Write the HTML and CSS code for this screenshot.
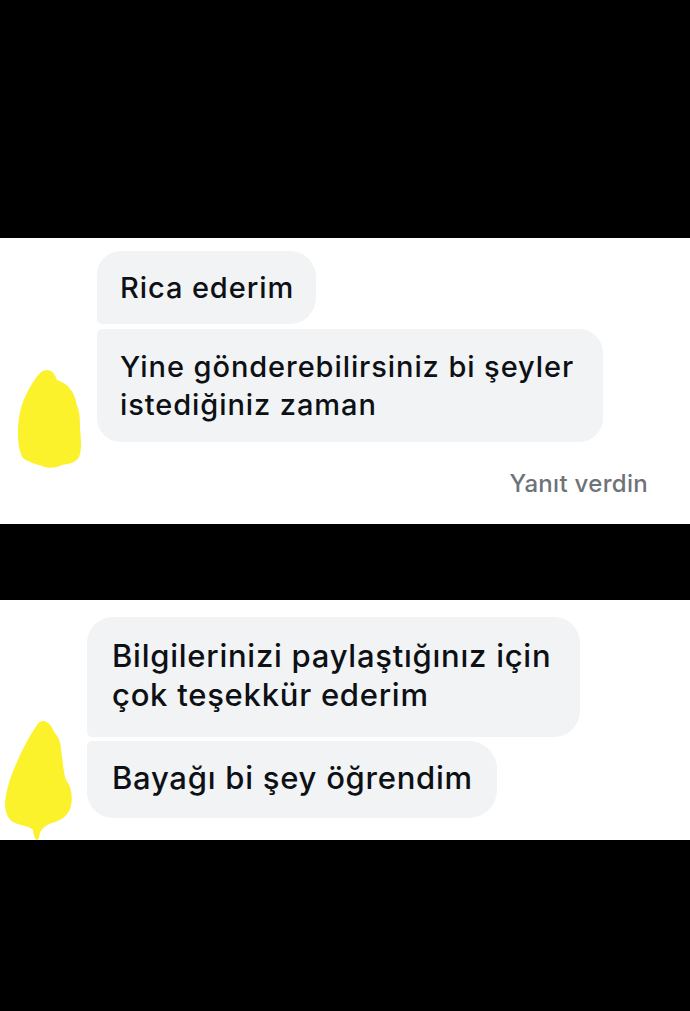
FILE: index.html
```html
<!DOCTYPE html>
<html lang="tr">
<head>
<meta charset="utf-8">
<title>Mesajlar</title>
<link rel="stylesheet" href="styles.css">
</head>
<body>
<div class="black top"></div>
<section class="panel panel-one">
  <div class="row">
    <div class="avatar avatar-one">
      <svg width="97" height="100" viewBox="0 368 97 100">
        <path class="blob" d="M47 370 C52 370 55 374 57 380 C62 382 67 384 70 389 C74 393 76 400 77 406 C80 412 80 420 80 428 C81 440 82 450 79 457 C76 463 68 464 62 465 C56 468 48 469 42 466 C35 464 29 462 24 459 C20 455 18 445 18 433 C18 420 20 408 25 397 C29 388 34 380 39 374 C42 371 44 370 47 370 Z"/>
      </svg>
    </div>
    <div class="group">
      <div class="bubble b1">Rica ederim</div>
      <div class="bubble b2">Yine gönderebilirsiniz bi şeyler<br>istediğiniz zaman</div>
    </div>
  </div>
  <div class="status">Yanıt verdin</div>
</section>
<div class="black middle"></div>
<section class="panel panel-two">
  <div class="row">
    <div class="avatar avatar-two">
      <svg width="87" height="120" viewBox="0 720 87 120">
        <path class="blob" d="M43 721 C48 721 52 726 54 732 C58 736 61 742 61 750 C63 760 63 772 66 780 C71 786 73 796 71 806 C69 815 61 821 52 823 C46 825 42 828 40 833 C39 837 39 840 37 840 C35 840 34 836 33 830 C30 826 22 826 15 823 C8 820 5 812 5 803 C6 790 11 775 17 762 C23 748 30 735 37 725 C39 722 41 721 43 721 Z"/>
      </svg>
    </div>
    <div class="group group-two">
      <div class="bubble b3">Bilgilerinizi paylaştığınız için<br>çok teşekkür ederim</div>
      <div class="bubble b4">Bayağı bi şey öğrendim</div>
    </div>
  </div>
</section>
<div class="black bottom"></div>
</body>
</html>
```

FILE: styles.css
```css
html, body {
  margin: 0;
  padding: 0;
  background: #000;
}
body {
  width: 690px;
  height: 1011px;
  overflow: hidden;
  font-family: Inter, "Noto Sans", "Liberation Sans", sans-serif;
  font-weight: 500;
  color: #0d1014;
}
.black.top { height: 238px; }
.black.middle { height: 76px; }
.black.bottom { height: 171px; }

.panel {
  background: #fff;
  box-sizing: border-box;
}
.panel-one {
  height: 286px;
  padding-top: 13px;
}
.panel-two {
  height: 240px;
  padding-top: 17px;
}
.row {
  display: flex;
  align-items: flex-start;
}
.avatar {
  align-self: flex-end;
  display: flex;
}
.avatar svg { display: block; }
.avatar-one {
  width: 97px;
  margin-bottom: -26px;
}
.avatar-two {
  width: 87px;
  margin-bottom: -22px;
}
.blob { fill: #fbf22c; }

.group {
  display: flex;
  flex-direction: column;
  align-items: flex-start;
  gap: 5px;
}
.group-two { gap: 4px; }

.bubble {
  background: #f1f3f5;
  box-sizing: border-box;
  white-space: nowrap;
}
.panel-one .bubble {
  font-size: 29px;
  letter-spacing: 0.92px;
  line-height: 38px;
  padding: 18px 22px 17px 23px;
}
.b1 {
  border-radius: 24px 26px 26px 5px;
}
.b2 {
  width: 506px;
  padding-top: 19px !important;
  padding-bottom: 18px !important;
  border-radius: 5px 24px 24px 24px;
}
.panel-two .bubble {
  font-size: 31px;
  letter-spacing: 0.75px;
  line-height: 39px;
  padding: 19px 24px 21px 25px;
}
.b3 {
  width: 493px;
  padding-bottom: 23px !important;
  border-radius: 26px 26px 26px 5px;
}
.b4 {
  padding-top: 17px !important;
  padding-bottom: 21px !important;
  border-radius: 5px 28px 28px 26px;
}

.status {
  text-align: right;
  padding-right: 42px;
  margin-top: 27px;
  font-size: 24px;
  letter-spacing: 0.3px;
  line-height: 30px;
  color: #6e7279;
}
```
